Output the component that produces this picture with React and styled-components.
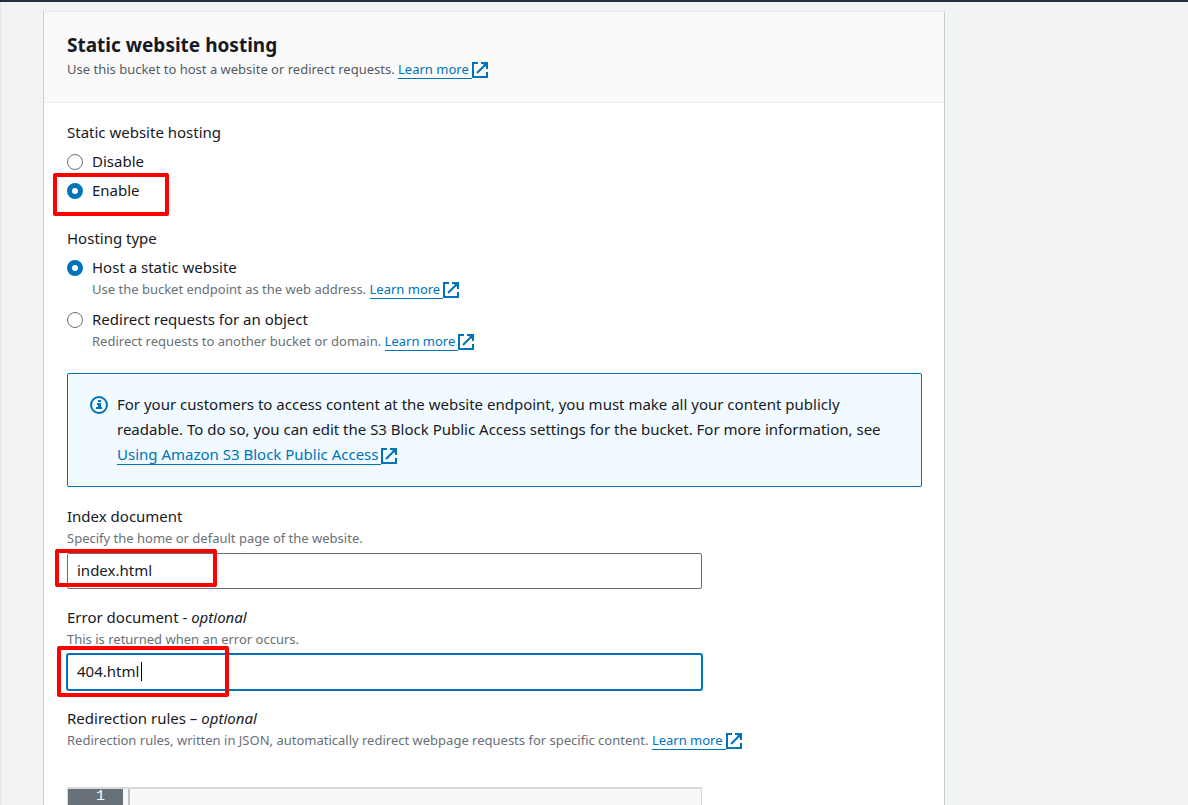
import React, { useState } from "react";
import styled, { createGlobalStyle, css } from "styled-components";

const blue = "#0073bb";

const GlobalStyle = createGlobalStyle`
  *, *::before, *::after { box-sizing: border-box; }
  body {
    margin: 0;
    background: #f2f3f3;
    color: #16191f;
    font-family: "Noto Sans", "Open Sans", sans-serif;
    font-size: 15px;
    line-height: 22px;
  }
`;

const Page = styled.div`
  min-height: 100vh;
  display: flex;
  flex-direction: column;
  border-top: 2px solid #232f3e;
`;

const Main = styled.main`
  flex: 1;
  display: flex;
  flex-direction: column;
  padding: 9px 42px 0;
  border-left: 1px solid #e6e8e8;
`;

const Card = styled.section`
  flex: 1;
  display: flex;
  flex-direction: column;
  width: 100%;
  max-width: 902px;
  background: #fff;
  border: 1px solid #c9cfcf;
  border-top-color: #eaeded;
  border-bottom: 0;
`;

const CardHeader = styled.header`
  padding: 21px 22px 22px 23px;
  background: #fafafa;
  border-bottom: 1px solid #eaeded;
`;

const Title = styled.h2`
  margin: 0 0 1px;
  font-size: 19px;
  line-height: 24px;
  font-weight: 700;
`;

const Description = styled.p`
  margin: 0;
  font-size: 13px;
  line-height: 22px;
  color: ${(p) => (p.$strong ? "#545b64" : "#687078")};
`;

const CardBody = styled.div`
  flex: 1;
  display: flex;
  flex-direction: column;
  padding: 18px 22px 0 23px;
`;

const Link = styled.a`
  color: ${blue};
  text-decoration: none;
  white-space: nowrap;
`;

const LinkText = styled.span`
  border-bottom: 1px solid ${blue};
  padding-right: 3px;
`;

const Icon = styled.svg`
  width: 16px;
  height: 16px;
  vertical-align: -4px;
  fill: none;
  stroke: ${blue};
  stroke-width: 2;
`;

const RadioGroup = styled.fieldset`
  margin: 0 0 ${(p) => p.$after}px;
  padding: 0;
  border: 0;
  min-width: 0;
`;

const Legend = styled.legend`
  padding: 0;
  margin-bottom: 7px;
`;

const Options = styled.div`
  display: grid;
  gap: ${(p) => p.$gap}px;
`;

const Option = styled.div`
  position: relative;
  display: grid;
  grid-template-columns: 16px 1fr;
  column-gap: 9px;
`;

const Radio = styled.input.attrs({ type: "radio" })`
  appearance: none;
  width: 16px;
  height: 16px;
  margin: 4px 0 0;
  border: 1px solid #687078;
  border-radius: 50%;
  background: #fff;
  &:checked { border: 5px solid ${blue}; }
`;

const OptionNote = styled(Description)`
  grid-column: 2;
`;

const Alert = styled.div`
  display: flex;
  gap: 9px;
  margin-bottom: 18px;
  padding: 18px 22px 19px;
  border: 1px solid ${blue};
  border-radius: 2px;
  background: #f1faff;
  line-height: 25px;
`;

const InfoIcon = styled.svg`
  flex: none;
  width: 18px;
  height: 18px;
  margin-top: 4px;
`;

const AlertText = styled.p`
  margin: 0;
`;

const Field = styled.div`
  margin-bottom: 17px;
`;

const FieldLabel = styled.label`
  display: block;
`;

const InputWrap = styled.div`
  position: relative;
  max-width: 635px;
  margin-top: 4px;
`;

const TextInput = styled.input`
  display: block;
  width: 100%;
  height: 36px;
  padding: 0 9px 2px;
  border: 1px solid #687078;
  border-radius: 2px;
  background: #fff;
  color: inherit;
  font: inherit;
  outline: 0;
  ${(p) => p.$active && css`
    border-color: ${blue};
    box-shadow: 0 0 0 1px ${blue};
    caret-color: transparent;
  `}
`;

const Caret = styled.span`
  position: absolute;
  left: 74px;
  top: 8px;
  width: 1px;
  height: 19px;
  background: #000;
`;

const Highlight = styled.span`
  position: absolute;
  left: ${(p) => p.$left}px;
  top: ${(p) => p.$top}px;
  width: ${(p) => p.$width}px;
  height: ${(p) => p.$height}px;
  border: 4px solid #fe0000;
  border-radius: 2px;
  pointer-events: none;
`;

const Editor = styled.div`
  flex: 1;
  display: grid;
  grid-template-columns: 55px 1fr;
  column-gap: 5px;
  max-width: 635px;
  min-height: 18px;
  margin-top: 36px;
  border: 1px solid #d5dbdb;
  border-top-width: 2px;
  border-bottom: 0;
  background: #f8f8f8;
  font: 15px/16px "Liberation Mono", monospace;
`;

const Gutter = styled.div`
  padding-right: 18px;
  background: #687078;
  color: #fff;
  text-align: right;
`;

const CodeArea = styled.textarea`
  width: 100%;
  height: 0;
  min-height: 100%;
  padding: 0;
  border: 0;
  border-left: 2px solid #c4c4c4;
  background: transparent;
  resize: none;
  outline: 0;
  font: inherit;
`;

function ExternalLink({ children }) {
  return (
    <Link href="#">
      <LinkText>{children}</LinkText>
      <Icon viewBox="0 0 16 16" aria-hidden="true">
        <path d="M6 1H1v14h14v-5M9 1h6v6M5 11l9-9" />
        <path d="M11 2h3v3z" fill={blue} stroke="none" />
      </Icon>
    </Link>
  );
}

export default function App() {
  const [hosting, setHosting] = useState("enable");
  const [type, setType] = useState("host");
  const [index, setIndex] = useState("index.html");
  const [error, setError] = useState("404.html");

  return (
    <Page>
      <GlobalStyle />
      <Main>
        <Card>
          <CardHeader>
            <Title>Static website hosting</Title>
            <Description $strong>
              Use this bucket to host a website or redirect requests. <ExternalLink>Learn more</ExternalLink>
            </Description>
          </CardHeader>
          <CardBody>
            <RadioGroup $after={26}>
              <Legend>Static website hosting</Legend>
              <Options $gap={7}>
                <Option>
                  <Radio id="disable" name="hosting" checked={hosting === "disable"} onChange={() => setHosting("disable")} />
                  <label htmlFor="disable">Disable</label>
                </Option>
                <Option>
                  <Radio id="enable" name="hosting" checked={hosting === "enable"} onChange={() => setHosting("enable")} />
                  <label htmlFor="enable">Enable</label>
                  <Highlight $left={-14} $top={-6} $width={116} $height={43} />
                </Option>
              </Options>
            </RadioGroup>

            <RadioGroup $after={21}>
              <Legend>Hosting type</Legend>
              <Options $gap={8}>
                <Option>
                  <Radio id="host" name="type" checked={type === "host"} onChange={() => setType("host")} />
                  <label htmlFor="host">Host a static website</label>
                  <OptionNote>
                    Use the bucket endpoint as the web address. <ExternalLink>Learn more</ExternalLink>
                  </OptionNote>
                </Option>
                <Option>
                  <Radio id="redirect" name="type" checked={type === "redirect"} onChange={() => setType("redirect")} />
                  <label htmlFor="redirect">Redirect requests for an object</label>
                  <OptionNote>
                    Redirect requests to another bucket or domain. <ExternalLink>Learn more</ExternalLink>
                  </OptionNote>
                </Option>
              </Options>
            </RadioGroup>

            <Alert>
              <InfoIcon viewBox="0 0 18 18" aria-hidden="true">
                <circle cx="9" cy="9" r="8" fill="none" stroke={blue} strokeWidth="2" />
                <path d="M8 4h3v2H8zM7 7h4v4h1v2H6v-2h2V9H7z" fill={blue} />
              </InfoIcon>
              <AlertText>
                For your customers to access content at the website endpoint, you must make all your content publicly
                readable. To do so, you can edit the S3 Block Public Access settings for the bucket. For more
                information, see <ExternalLink>Using Amazon S3 Block Public Access</ExternalLink>
              </AlertText>
            </Alert>

            <Field>
              <FieldLabel htmlFor="index-doc">Index document</FieldLabel>
              <Description>Specify the home or default page of the website.</Description>
              <InputWrap>
                <TextInput id="index-doc" value={index} onChange={(e) => setIndex(e.target.value)} />
                <Highlight $left={-12} $top={-4} $width={162} $height={38} />
              </InputWrap>
            </Field>

            <Field>
              <FieldLabel htmlFor="error-doc">Error document - <em>optional</em></FieldLabel>
              <Description>This is returned when an error occurs.</Description>
              <InputWrap>
                <TextInput id="error-doc" $active value={error} onChange={(e) => setError(e.target.value)} />
                <Caret />
                <Highlight $left={-10} $top={-8} $width={172} $height={51} />
              </InputWrap>
            </Field>

            <FieldLabel htmlFor="rules">Redirection rules – <em>optional</em></FieldLabel>
            <Description>
              Redirection rules, written in JSON, automatically redirect webpage requests for specific content.{" "}
              <ExternalLink>Learn more</ExternalLink>
            </Description>
            <Editor>
              <Gutter>1</Gutter>
              <CodeArea id="rules" />
            </Editor>
          </CardBody>
        </Card>
      </Main>
    </Page>
  );
}
